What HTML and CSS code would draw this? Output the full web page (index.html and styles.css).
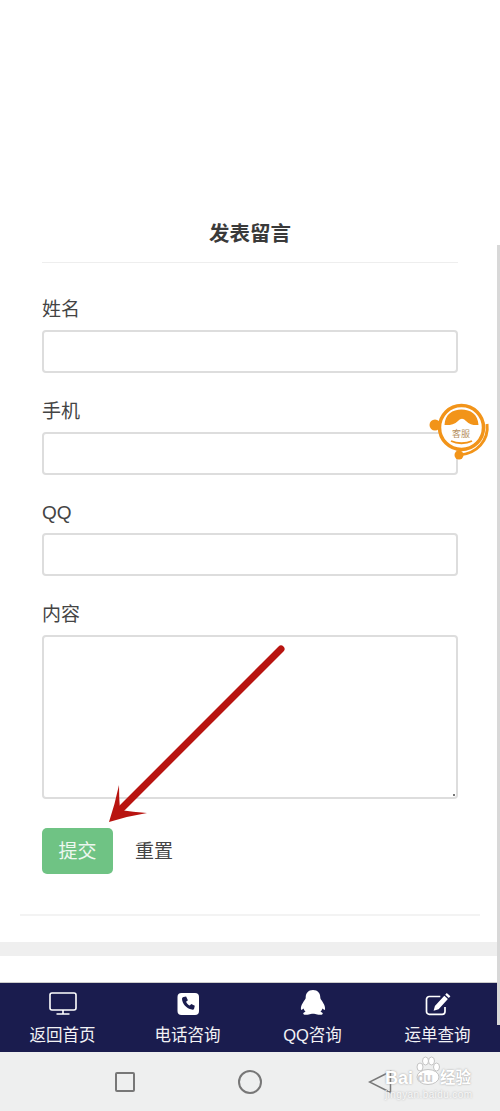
FILE: index.html
```html
<!DOCTYPE html>
<html lang="zh-CN">
<head>
  <meta charset="UTF-8" />
  <meta name="viewport" content="width=device-width, initial-scale=1.0"/>
  <title>发表留言</title>
  <link rel="stylesheet" href="styles.css">
</head>
<body>
  <div class="page">
    <div class="top-space"></div>
    <div class="card">
      <h2 class="card-title">发表留言</h2>
      <form class="msg-form">
        <label class="field-label">姓名</label>
        <input type="text" class="field-input" />
        <label class="field-label">手机</label>
        <input type="text" class="field-input" />
        <label class="field-label">QQ</label>
        <input type="text" class="field-input" />
        <label class="field-label">内容</label>
        <textarea class="field-area"></textarea>
        <div class="btn-row">
          <button type="button" class="btn-submit">提交</button>
          <button type="reset" class="btn-reset">重置</button>
        </div>
      </form>
    </div>
    <div class="gray-band"></div>
    <div class="white-gap"></div>
    <nav class="bottom-nav">
      <a class="nav-item">
        <svg class="nav-icon" viewBox="0 0 28 24" width="28" height="24"><rect x="1" y="1" width="26" height="17" rx="2" fill="none" stroke="#fff" stroke-width="1.6"/><path d="M14 18v3.5M7.500 22h13" stroke="#fff" stroke-width="1.6" fill="none"/></svg>
        <span>返回首页</span>
      </a>
      <a class="nav-item">
        <svg class="nav-icon" viewBox="0 0 24 24" width="24" height="24"><rect x="1.500" y="1" width="21.500" height="22" rx="4" fill="#fff"/><path d="M7.500 5l2.600-.6 1.800 3.800-1.800 1.500c.7 1.700 2 3 3.700 3.900l1.500-1.600 3.500 1.800-.7 2.900c-.3.900-1.400 1.100-2.300.9C10.500 16.400 6.300 12 6 7c0-.9.600-1.700 1.500-2z" fill="#1a1c4e"/></svg>
        <span>电话咨询</span>
      </a>
      <a class="nav-item">
        <svg class="nav-icon nav-icon-qq" viewBox="0 0 26 26" width="26" height="26"><path d="M13 0c-4.800 0-7.300 3.300-7.300 7.500 0 1-.3 1.600-1 2.500-2 2.700-4.200 6.500-3.700 9.300.2 1 1 .8 2.500-.8.400 1.400 1.100 2.500 2 3.300-1.700.6-2.500 1.400-2.200 2.200.4.900 3.200 1 5.500.6 1.200-.2 2.700-.8 4.200-.8s3 .6 4.200.8c2.300.4 5.100.3 5.500-.6.300-.8-.5-1.600-2.200-2.200.9-.8 1.600-1.900 2-3.300 1.500 1.600 2.300 1.800 2.500.8.500-2.800-1.700-6.600-3.700-9.300-.7-.9-1-1.500-1-2.500C20.300 3.300 17.800 0 13 0z" fill="#fff"/></svg>
        <span>QQ咨询</span>
      </a>
      <a class="nav-item">
        <svg class="nav-icon" viewBox="0 0 26 24" width="26" height="24"><path d="M20 15v4.500a2.800 2.800 0 0 1-2.800 2.800H4.300a2.800 2.800 0 0 1-2.800-2.800V7.300a2.800 2.800 0 0 1 2.800-2.800h11" fill="none" stroke="#fff" stroke-width="1.700"/><path d="M21.800 1l3.600 3.200-1.600 1.800-3.600-3.200zM19.300 3.800l3.600 3.200-9.300 10.300-5 1.500 1.300-4.800z" fill="#fff"/></svg>
        <span>运单查询</span>
      </a>
    </nav>
    <div class="sys-bar">
      <span class="sys-square"></span>
      <span class="sys-circle"></span>
      <svg class="sys-back" viewBox="0 0 24 24" width="24" height="24"><path d="M22.500 1.500L1.500 12l21 10.500z" fill="none" stroke="#777" stroke-width="1.500"/></svg>
    </div>

    <div class="scroll-thumb"></div>

    <svg class="kefu" viewBox="0 0 64 64" width="64" height="64">
      <circle cx="33.500" cy="27.500" r="22" fill="#fff" stroke="#f29419" stroke-width="3.500"/>
      <path d="M16.500 25C17 14 24.500 9.500 33.500 9.500S50 14 50.500 25c-4.500.5-9-.5-12.500-4-3-3-5-3-8 0-3.500 3.500-9 4.500-13.500 4z" fill="#f29419"/>
      <path d="M23 41c6 3 15 3 21 0" fill="none" stroke="#f29419" stroke-width="1.800"/>
      <circle cx="7" cy="25" r="5.500" fill="#f29419"/>
      <path d="M59 24c2 16-10 30-28 31" fill="none" stroke="#f29419" stroke-width="3"/>
      <circle cx="31" cy="55" r="4.500" fill="#f29419"/>
      <text x="33" y="36.500" text-anchor="middle" class="kefu-text">客服</text>
    </svg>

    <svg class="red-arrow" viewBox="0 0 200 200" width="200" height="200">
      <path d="M173 9L14 168" stroke="#b81410" stroke-width="7" stroke-linecap="round" fill="none"/>
      <path d="M1 182Q7 164 11 145Q11 158 12 170Q25 172 39 173Q20 176 1 182z" fill="#b81410"/>
    </svg>

    <div class="watermark">
      <svg class="wm-paw" viewBox="0 0 24 30" width="24" height="30">
        <ellipse cx="4" cy="11" rx="3" ry="4" />
        <ellipse cx="9.500" cy="5" rx="3" ry="4" />
        <ellipse cx="15.500" cy="5" rx="3" ry="4" />
        <ellipse cx="20.500" cy="11" rx="3" ry="4" />
        <ellipse cx="12" cy="21" rx="11" ry="7.500" />
      </svg>
      <div class="wm-main">
        <span>Bai</span>
        <span class="wm-du">du</span>
        <span class="wm-cn">经验</span>
      </div>
      <span class="wm-sub">jingyan.baidu.com</span>
    </div>
  </div>
</body>
</html>
```

FILE: styles.css
```css
* {
  margin: 0;
  padding: 0;
  box-sizing: border-box;
  font-family: "Liberation Sans", "Noto Sans CJK SC", sans-serif;
}
body {
  background: #ffffff;
  color: #333;
  overflow: hidden;
}
.page {
  position: relative;
  width: 500px;
  height: 1111px;
  overflow: hidden;
}
.top-space {
  height: 194px;
}
.card {
  margin: 0 20px;
  padding: 0 22px;
  height: 722px;
  border-bottom: 2px solid #f3f3f3;
}
.card-title {
  height: 69px;
  line-height: 79px;
  text-align: center;
  font-size: 20.5px;
  font-weight: 700;
  color: #3a3a3a;
  border-bottom: 1px solid #eeeeee;
}
.msg-form {
  display: flex;
  flex-direction: column;
}
.field-label {
  font-size: 19px;
  line-height: 28px;
  color: #444;
  margin-top: 33px;
  margin-bottom: 6px;
}
.field-input {
  height: 43px;
  border: 2px solid #dddddd;
  border-radius: 4px;
  background: #fff;
}
.field-input + .field-label {
  margin-top: 24.500px;
}
.field-area {
  height: 164px;
  border: 2px solid #dddddd;
  border-radius: 4px;
  resize: none;
  background: linear-gradient(#777, #777) no-repeat right 1px bottom 1px / 2px 2px #fff;
}
.btn-row {
  display: flex;
  align-items: center;
  margin-top: 29.500px;
  gap: 22px;
}
.btn-submit {
  width: 71px;
  height: 46px;
  border: none;
  border-radius: 5px;
  background: #6fc384;
  color: #eef7f0;
  font-size: 19px;
  padding-bottom: 4px;
}
.btn-reset {
  border: none;
  background: none;
  color: #444;
  font-size: 19px;
  padding-bottom: 4px;
}
.gray-band {
  height: 14px;
  margin-top: 26px;
  background: #efefef;
}
.white-gap {
  height: 27px;
  border-bottom: 1px solid #cccccc;
}
.bottom-nav {
  display: grid;
  grid-template-columns: repeat(4, 125px);
  height: 69px;
  background: #1a1c4e;
}
.nav-item {
  display: flex;
  flex-direction: column;
  align-items: center;
  padding-top: 9px;
  color: #f2f2f5;
  font-size: 16.5px;
}
.nav-icon {
  margin-bottom: 6px;
}
.nav-icon-qq {
  margin-top: -2px;
  margin-bottom: 6px;
}
.sys-bar {
  display: flex;
  align-items: center;
  height: 59px;
  padding-left: 115px;
  background: #eeefef;
}
.sys-square {
  width: 20px;
  height: 20px;
  border: 2px solid #777;
  border-radius: 2px;
}
.sys-circle {
  width: 24px;
  height: 24px;
  margin-left: 103px;
  border: 2px solid #777;
  border-radius: 50%;
}
.sys-back {
  margin-left: 106px;
}
.scroll-thumb {
  position: absolute;
  left: 497px;
  top: 245px;
  width: 3px;
  height: 780px;
  background: #d8d8d8;
}
.kefu {
  position: absolute;
  left: 428px;
  top: 400px;
}
.kefu-text {
  font-size: 9px;
  fill: #b5905e;
}
.red-arrow {
  position: absolute;
  left: 108px;
  top: 640px;
}
.watermark {
  position: absolute;
  left: 385px;
  top: 1068px;
  width: 90px;
  display: flex;
  flex-direction: column;
  color: #fff;
  text-shadow: 0 0 2px #999;
}
.wm-paw {
  position: absolute;
  left: 31px;
  top: -12px;
  fill: #fff;
  stroke: #c4c4c4;
  stroke-width: 1;
}
.wm-main {
  position: relative;
  display: flex;
  align-items: center;
  font-size: 18px;
  font-weight: 700;
  line-height: 20px;
}
.wm-du {
  margin-left: 4px;
  font-size: 13px;
  color: #d0d0d0;
  text-shadow: none;
}
.wm-cn {
  margin-left: 7px;
  font-size: 15.500px;
}
.wm-sub {
  margin-top: 1px;
  font-size: 10px;
  line-height: 12px;
  letter-spacing: 0.4px;
  color: #f8f8f8;
  text-shadow: 0 0 2px #aaa;
}
```
